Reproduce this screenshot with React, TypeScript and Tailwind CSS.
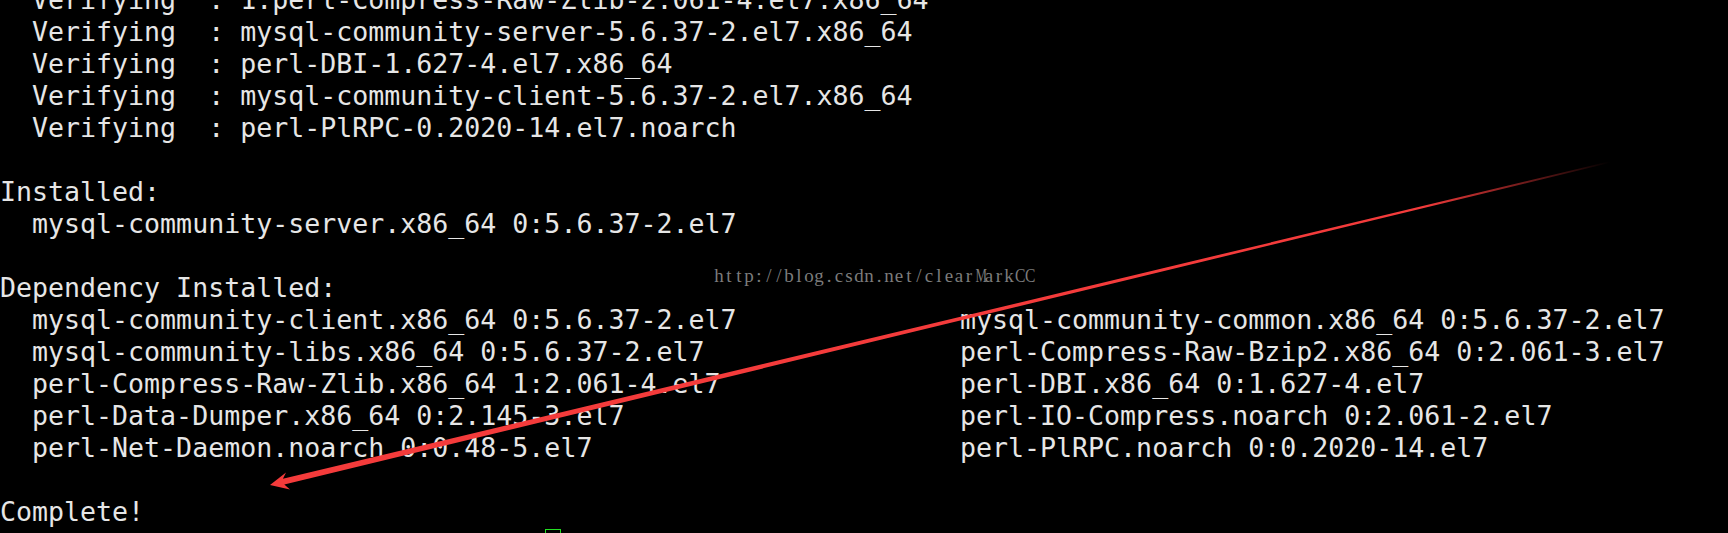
import React from "react";

const top: string[] = [
  "  Verifying  : 1:perl-Compress-Raw-Zlib-2.061-4.el7.x86_64",
  "  Verifying  : mysql-community-server-5.6.37-2.el7.x86_64",
  "  Verifying  : perl-DBI-1.627-4.el7.x86_64",
  "  Verifying  : mysql-community-client-5.6.37-2.el7.x86_64",
  "  Verifying  : perl-PlRPC-0.2020-14.el7.noarch",
  "",
  "Installed:",
  "  mysql-community-server.x86_64 0:5.6.37-2.el7",
  "",
  "Dependency Installed:",
];

const deps: [string, string][] = [
  ["  mysql-community-client.x86_64 0:5.6.37-2.el7", "mysql-community-common.x86_64 0:5.6.37-2.el7"],
  ["  mysql-community-libs.x86_64 0:5.6.37-2.el7", "perl-Compress-Raw-Bzip2.x86_64 0:2.061-3.el7"],
  ["  perl-Compress-Raw-Zlib.x86_64 1:2.061-4.el7", "perl-DBI.x86_64 0:1.627-4.el7"],
  ["  perl-Data-Dumper.x86_64 0:2.145-3.el7", "perl-IO-Compress.noarch 0:2.061-2.el7"],
  ["  perl-Net-Daemon.noarch 0:0.48-5.el7", "perl-PlRPC.noarch 0:0.2020-14.el7"],
];

const mark = "http://blog.csdn.net/clearMarkCC";

function cellClass(c: string): string {
  if (c === "M") return "inline-block w-[10px] text-center scale-x-[0.68]";
  if (c === "C") return "inline-block w-[10px] text-center scale-x-[0.82]";
  return "inline-block w-[10px] text-center";
}

function Arrow() {
  return (
    <svg
      className="absolute left-0 top-0 pointer-events-none"
      width={1728}
      height={533}
      viewBox="0 0 1728 533"
    >
      <defs>
        <linearGradient id="fade" gradientUnits="userSpaceOnUse" x1="270" y1="485" x2="1610" y2="162">
          <stop offset="0" stopColor="#f43b3b" stopOpacity="1" />
          <stop offset="0.86" stopColor="#f43b3b" stopOpacity="1" />
          <stop offset="1" stopColor="#f43b3b" stopOpacity="0" />
        </linearGradient>
      </defs>
      <polygon
        fill="url(#fade)"
        points="270,485 290,489.5 284.3,484.6 1610.2,162.7 1609.8,161.3 282.9,478.8 286,472.6"
      />
    </svg>
  );
}

export default function App() {
  const mono = { fontFamily: '"DejaVu Sans Mono", monospace' };
  return (
    <div className="relative w-[1728px] h-[533px] overflow-hidden bg-black">
      <div
        className="-mt-4 flex flex-col text-[26.6px] leading-[32px] text-[#e6e6e6] whitespace-pre"
        style={mono}
      >
        {top.map((t, i) => (
          <div key={i} className="h-[32px]">
            {t}
          </div>
        ))}
        {deps.map(([a, b], i) => (
          <div key={"d" + i} className="flex h-[32px]">
            <div className="w-[960px] shrink-0">{a}</div>
            <div>{b}</div>
          </div>
        ))}
        <div className="h-[32px]"></div>
        <div className="h-[32px]">Complete!</div>
        <div className="flex h-[32px] pl-[545px]">
          <div className="mt-[1px] w-[16px] h-[30px] border border-[#22e022]"></div>
        </div>
      </div>
      <div
        className="absolute left-[714px] top-[266px] flex text-[19px] leading-[20px] text-[#7c7c7c]"
        style={{ fontFamily: '"Liberation Serif", serif' }}
      >
        {mark.split("").map((c, i) => (
          <span key={i} className={cellClass(c)}>
            {c}
          </span>
        ))}
      </div>
      <Arrow />
    </div>
  );
}
